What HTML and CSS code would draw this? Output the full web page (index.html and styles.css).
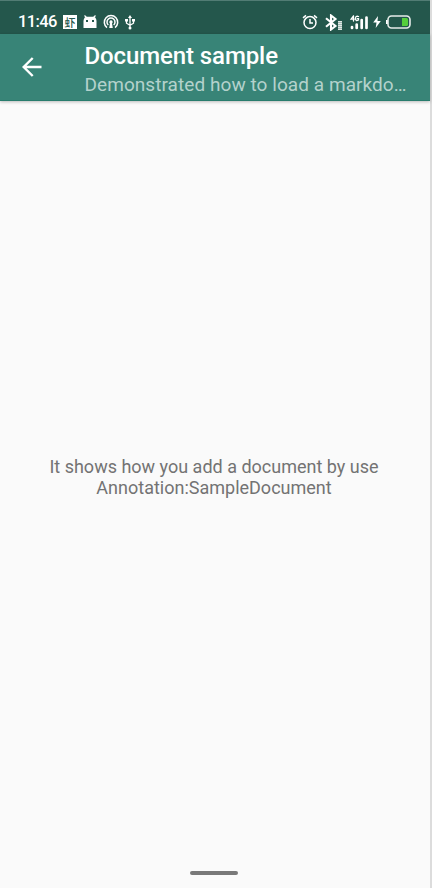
FILE: index.html
```
<!DOCTYPE html>
<html lang="en">
<head>
<meta charset="utf-8">
<title>Document sample</title>
<link rel="stylesheet" href="styles.css">
</head>
<body>
<div class="screen">
  <header class="status">
    <div class="status-left">
      <span class="clock">11:46</span>
      <span class="app-badge">虾</span>
      <svg class="android" width="14" height="14" viewBox="0 0 14 14"><path d="M1.500 .5l2 2M12.500 .5l-2 2" stroke="#fff" stroke-width="1.200"/><path fill="#fff" d="M.5 13V6Q.8 1.700 4 1.700h6q3.200 0 3.500 4.300v7z"/><path fill="#24574c" d="M3 5h2v2H3zM9 5h2v2H9z"/></svg>
      <svg class="cast" width="16" height="16" viewBox="0 0 16 16" fill="none" stroke="#fff" stroke-width="1.500"><path d="M4 13.600a6.700 6.700 0 1 1 8 0M5.300 11a4 4 0 1 1 5.400 0"/><path d="M8 6.300a1.800 1.800 0 0 1 1 3.200l.8 4.500H6.200L7 9.500a1.800 1.800 0 0 1 1-3.200z" fill="#fff" stroke="none"/></svg>
      <svg class="usb" width="10" height="15" viewBox="0 0 10 15" fill="none" stroke="#fff" stroke-width="1.300"><path d="M5 2v11M1.500 5v3.200L5 10.200l3.500-2V5"/><path d="M5 0l2 3H3zM0 4h3v2.500H0zM7 4h3v2.500H7z" fill="#fff" stroke="none"/><circle cx="5" cy="13" r="1.500" fill="#fff" stroke="none"/></svg>
    </div>
    <div class="status-right">
      <svg class="alarm" width="16" height="16" viewBox="0 0 16 16" fill="none" stroke="#fff" stroke-width="1.500"><circle cx="8" cy="8.600" r="6"/><path d="M8 5v4h3M1 3.800l3-2.500M15 3.800l-3-2.500"/></svg>
      <svg class="bluetooth" width="18" height="17" viewBox="0 0 18 17" fill="none" stroke="#fff"><path d="M1 4.200l9.500 7.800L6 15.500v-14L10.500 5 1 12.800" stroke-width="2.100"/><path d="M13 7h4v9h-4z" fill="#9fb7b1" stroke="none"/><path d="M13 7.500h4M13 9.500h4M13 11.500h4M13 13.500h4M13 15.500h4" stroke="#e0e8e5"/></svg>
      <svg class="signal" width="19" height="15" viewBox="0 0 19 15" fill="none" stroke="#fff" stroke-linecap="round"><path d="M2 13v-1M6.700 13V9.500M11.700 13V5M16.500 13V2.500" stroke-width="2.700"/><path d="M3.500 1L1 4.200h3.200M3.500 1v5M8.500 1.500Q5.500.500 5.500 3.500T8.500 5V3.600H7.300" stroke-width="1.300"/></svg>
      <svg class="bolt" width="8" height="12" viewBox="0 0 8 12"><path d="M5 0L.2 6.600H3.500L2.700 12 7.800 5H4.500z" fill="#fff"/></svg>
      <svg class="battery" width="25" height="14" viewBox="0 0 25 14"><rect x="2" y="1" width="22" height="12" rx="3.500" fill="none" stroke="#e6ece9" stroke-width="1.600"/><path d="M0 5h1.700v4H0z" fill="#fff"/><path d="M16 3h4.500q1.500 0 1.500 1.500v5q0 1.500-1.500 1.500H16z" fill="#55ce3c"/></svg>
    </div>
  </header>
  <div class="appbar">
    <svg class="back" width="20" height="20" viewBox="0 0 20 20" fill="none" stroke="#fff" stroke-width="2.400"><path d="M19.500 10H2M10.700 1L1.700 10l9 9"/></svg>
    <div class="titles">
      <h1>Document sample</h1>
      <p>Demonstrated how to load a markdo…</p>
    </div>
  </div>
  <main class="content">
    <p>It shows how you add a document by use</p>
    <p>Annotation:SampleDocument</p>
  </main>
  <footer class="nav"><div class="pill"></div></footer>
</div>
</body>
</html>
```

FILE: styles.css
```
* { box-sizing: border-box; margin: 0; padding: 0; }
body {
  width: 432px;
  height: 888px;
  overflow: hidden;
  background: #dcdcdc;
  font-family: Roboto, "Noto Sans CJK SC", sans-serif;
}
svg { display: block; flex: none; }
.screen {
  width: 430px;
  height: 888px;
  display: flex;
  flex-direction: column;
  background: #fafafa;
}
.status {
  height: 34px;
  flex: none;
  display: flex;
  justify-content: space-between;
  padding: 9px 19px 0 18px;
  background: #24574c;
  border-top: 1px solid #527c74;
  color: #fff;
}
.status-left, .status-right { display: flex; align-items: center; height: 24px; }
.clock {
  width: 45px;
  font-size: 16.5px;
  font-weight: 500;
  line-height: 24px;
  letter-spacing: -.6px;
  white-space: nowrap;
}
.app-badge {
  width: 14px;
  height: 14px;
  background: #fff;
  color: #24574c;
  font: 500 11px/14px "Noto Sans CJK SC", sans-serif;
  text-align: center;
}
.android { margin-left: 6px; }
.cast { margin-left: 6px; }
.usb { margin-left: 6px; }
.bluetooth { margin-left: 7px; }
.signal { margin-left: 7px; }
.bolt { margin-left: 4px; }
.battery { margin-left: 5px; }
.appbar {
  height: 67px;
  flex: none;
  display: flex;
  align-items: flex-start;
  padding: 8px 0 0 22px;
  background: #388477;
  border-bottom: 1px solid #287c6d;
  box-shadow: 0 1px 3px rgba(0, 0, 0, .25);
  color: #fff;
}
.back { margin-top: 15px; }
.titles { margin-left: 42.500px; white-space: nowrap; }
h1 { font-size: 24px; font-weight: 500; line-height: 28px; letter-spacing: -.1px; }
.titles p { font-size: 19px; line-height: 22px; margin-top: 4px; letter-spacing: .06px; color: #b4d2cc; }
.content {
  flex: 1;
  padding-top: 355px;
  color: #737373;
  font-size: 18px;
  line-height: 21px;
  text-align: center;
  white-space: nowrap;
}
.content p { margin-right: 2px; }
.nav { height: 18px; flex: none; display: flex; justify-content: center; }
.pill { width: 48px; height: 4px; margin: 1px 2px 0 0; border-radius: 2px; background: #797979; }
```
